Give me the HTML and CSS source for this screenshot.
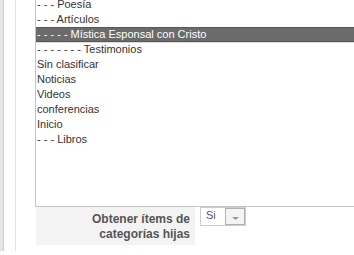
FILE: index.html
```html
<!DOCTYPE html>
<html lang="es">
<head>
  <meta charset="UTF-8" />
  <title>Categorías</title>
  <link rel="stylesheet" href="styles.css">
</head>
<body>

  <div class="outer">
    <div class="edge">
      <div class="panel">

        <!-- Category multi-select -->
        <div class="cat-list">
          <div class="cat-item">- - - Poesía</div>
          <div class="cat-item">- - - Artículos</div>
          <div class="cat-item selected">- - - - - Mística Esponsal con Cristo</div>
          <div class="cat-item">- - - - - - - Testimonios</div>
          <div class="cat-item">Sin clasificar</div>
          <div class="cat-item">Noticias</div>
          <div class="cat-item">Videos</div>
          <div class="cat-item">conferencias</div>
          <div class="cat-item">Inicio</div>
          <div class="cat-item">- - - Libros</div>
        </div>

        <!-- Child categories option -->
        <div class="opt-row">
          <div class="opt-label">Obtener ítems de<br>categorías hijas</div>
          <div class="dropdown">
            <span class="dropdown-value">Si</span>
            <span class="dropdown-btn">
              <svg width="9" height="5" viewBox="0 0 9 5"><path d="M1 1 L8 1 L4.5 4 Z" fill="#999"/></svg>
            </span>
          </div>
        </div>

      </div>
    </div>
  </div>

</body>
</html>
```

FILE: styles.css
```css
/* Basic page styling */
* {
  box-sizing: border-box;
  margin: 0;
  padding: 0;
}
body {
  background: #fff;
  font-family: "Liberation Sans", Arial, sans-serif;
  font-size: 11px;
  color: #333;
  overflow: hidden;
  height: 255px;
}

/* Left frame lines */
.outer {
  border-left: 3px solid #e6e6e6;
  height: 255px;
}
.edge {
  border-left: 1px solid #cfcfcf;
  padding-left: 11px;
  height: 100%;
}
.panel {
  border-left: 1px solid #e2e2e2;
  padding-left: 19px;
  height: 100%;
}

/* Category list (looks like a multi select) */
.cat-list {
  width: 322px;
  height: 211px;
  margin-top: -4px;
  border: 1px solid #c4c4c4;
  border-right-color: #e8e8e8;
  background: #fff;
}
.cat-item {
  height: 15px;
  line-height: 15px;
  padding-left: 1px;
  white-space: nowrap;
}
.cat-item.selected {
  background: #6b6b6b;
  color: #fff;
  border-top: 1px solid #585858;
  border-bottom: 1px solid #585858;
  line-height: 13px;
  box-shadow: 0 1px 0 #dcdcdc;
}

/* Option row */
.opt-row {
  display: flex;
  align-items: flex-start;
  padding-left: 1px;
}
.opt-label {
  width: 159px;
  height: 38px;
  background: #f3f3f3;
  padding: 5px 5px 0 0;
  text-align: right;
  font-size: 12px;
  font-weight: bold;
  line-height: 15px;
  color: #555;
}
.dropdown {
  display: flex;
  margin-left: 5px;
  height: 19px;
  border: 1px solid #cdcdcd;
  background: #fff;
}
.dropdown-value {
  width: 24px;
  padding-left: 5px;
  line-height: 15px;
  color: #555;
}
.dropdown-btn {
  width: 20px;
  border: 1px solid #b0b0b0;
  background: #f4f4f4;
  display: flex;
  justify-content: center;
  align-items: center;
  padding-top: 3px;
}
```
